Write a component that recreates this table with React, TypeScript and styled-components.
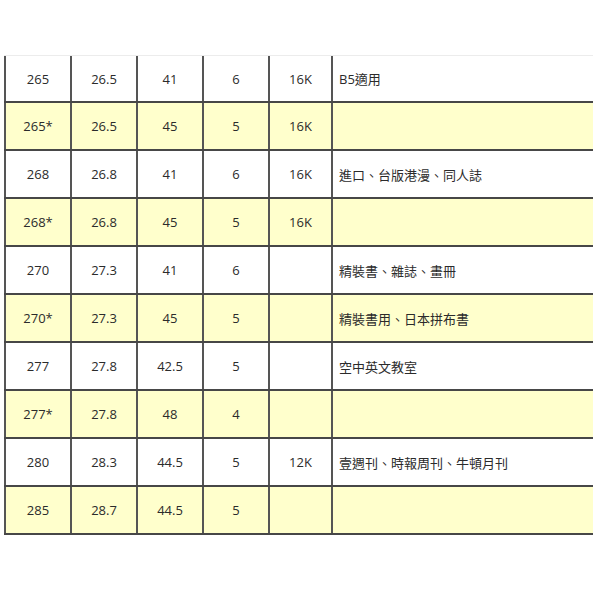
import React from 'react';
import styled, { createGlobalStyle } from 'styled-components';

const GlobalStyle = createGlobalStyle`
  html, body {
    margin: 0;
    padding: 0;
    background: #ffffff;
    overflow: hidden;
  }
  body {
    font-family: "Open Sans", "Noto Sans CJK TC", sans-serif;
    color: #2b2b2b;
  }
`;

// --------------- Sheet

const Page = styled.div`
  width: 593px;
  height: 593px;
  padding-top: 55px;
  padding-left: 4px;
  box-sizing: border-box;
  overflow: hidden;
`;

const Sheet = styled.div`
  display: flex;
  flex-direction: column;
  width: 589px;
  border-top: 1px solid #ececec;
  font-size: 13px;
`;

const Row = styled.div<{ $alt?: boolean; $first?: boolean }>`
  display: grid;
  grid-template-columns: 66px 66px 66px 66px 63px 1fr;
  box-sizing: border-box;
  height: ${(p) => (p.$first ? '47px' : '48px')};
  background: ${(p) => (p.$alt ? '#ffffcc' : '#ffffff')};
  border-bottom: 2px solid #474747;
`;

const Cell = styled.div<{ $note?: boolean }>`
  display: flex;
  align-items: center;
  justify-content: ${(p) => (p.$note ? 'flex-start' : 'center')};
  padding-left: ${(p) => (p.$note ? '6px' : '0')};
  border-left: 2px solid #555555;
  white-space: nowrap;
  color: #2b2b2b;
`;

const rows = [
  ['265', '26.5', '41', '6', '16K', 'B5適用'],
  ['265*', '26.5', '45', '5', '16K', ''],
  ['268', '26.8', '41', '6', '16K', '進口、台版港漫、同人誌'],
  ['268*', '26.8', '45', '5', '16K', ''],
  ['270', '27.3', '41', '6', '', '精裝書、雜誌、畫冊'],
  ['270*', '27.3', '45', '5', '', '精裝書用、日本拼布書'],
  ['277', '27.8', '42.5', '5', '', '空中英文教室'],
  ['277*', '27.8', '48', '4', '', ''],
  ['280', '28.3', '44.5', '5', '12K', '壹週刊、時報周刊、牛頓月刊'],
  ['285', '28.7', '44.5', '5', '', ''],
];

const App = (): JSX.Element => (
  <>
    <GlobalStyle />
    <Page>
      <Sheet>
        {rows.map((r, i) => (
          <Row key={i} $alt={i % 2 === 1} $first={i === 0}>
            {r.map((c, j) => (
              <Cell key={j} $note={j === 5}>
                {c}
              </Cell>
            ))}
          </Row>
        ))}
      </Sheet>
    </Page>
  </>
);

export default App;
